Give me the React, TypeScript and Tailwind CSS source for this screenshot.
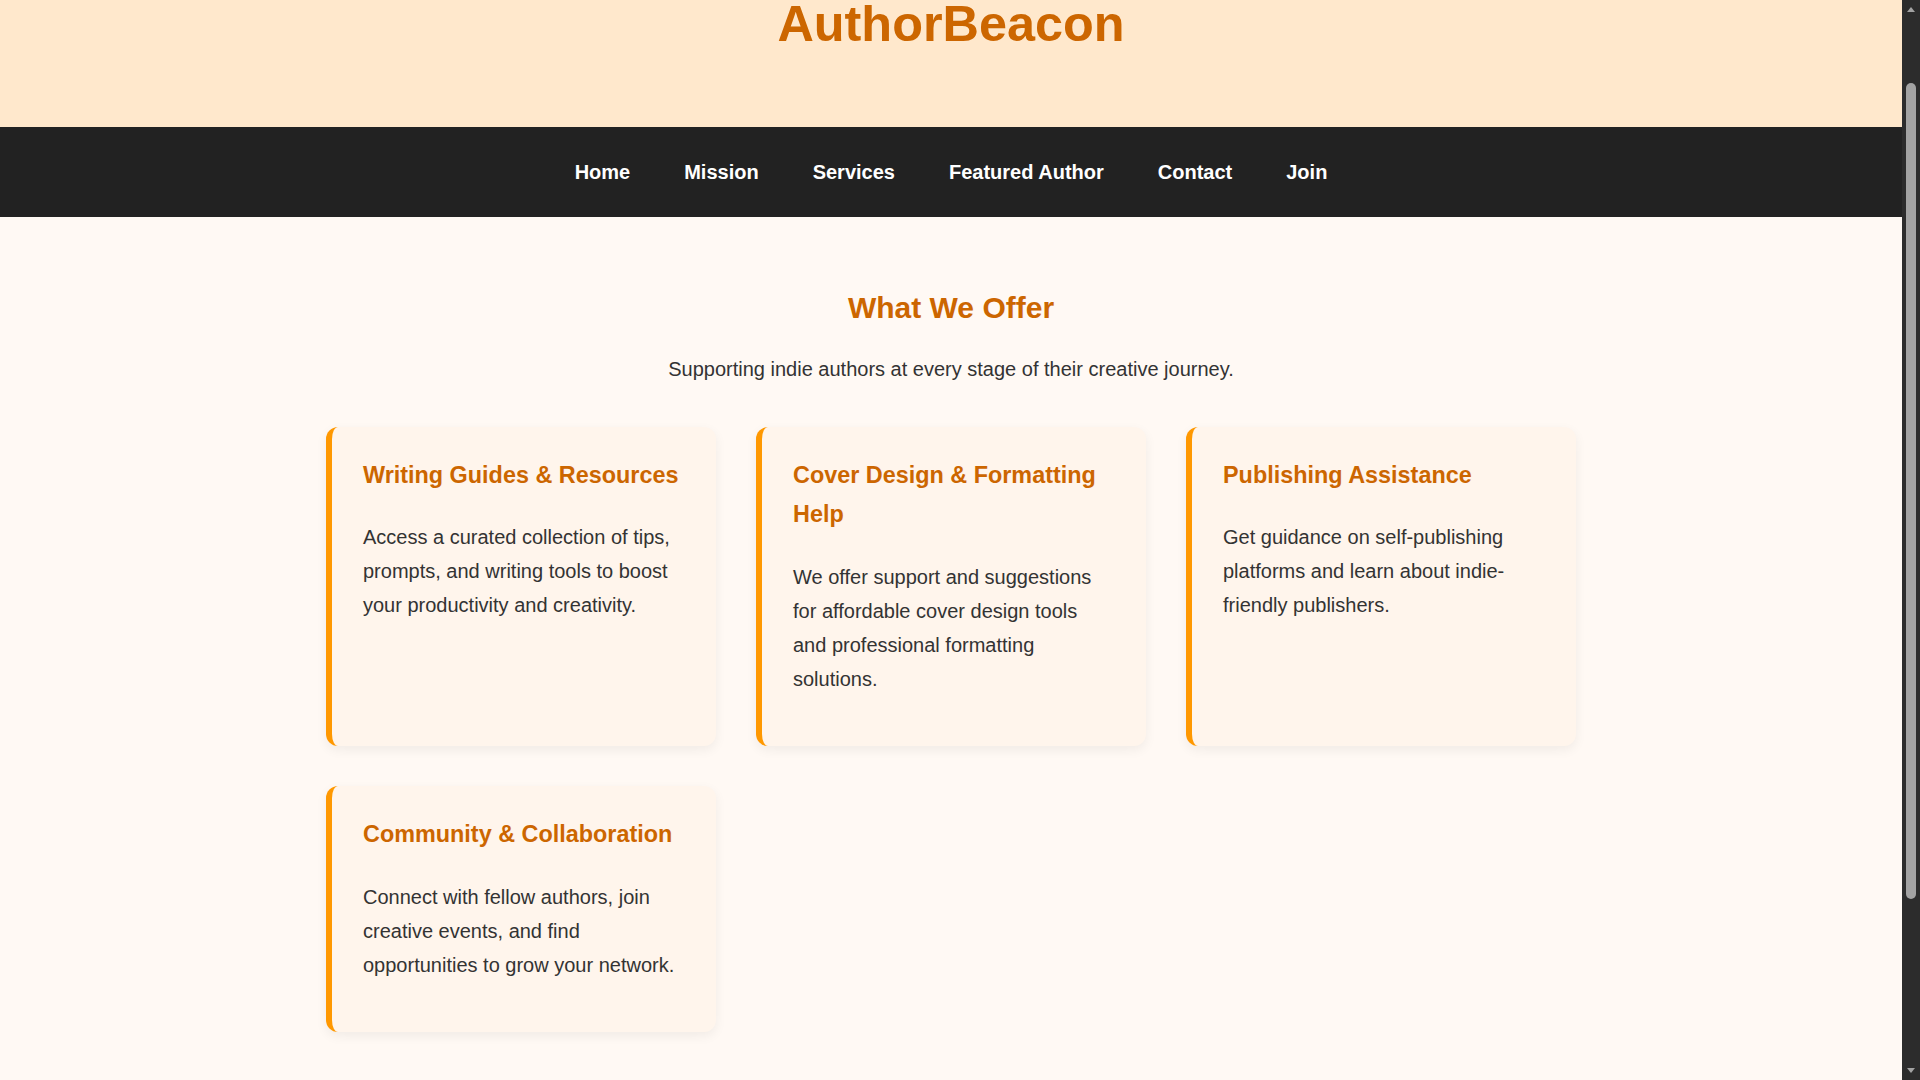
import { useEffect } from 'react';

const services = [
  {
    title: 'Writing Guides & Resources',
    text: 'Access a curated collection of tips, prompts, and writing tools to boost your productivity and creativity.',
  },
  {
    title: 'Cover Design & Formatting Help',
    text: 'We offer support and suggestions for affordable cover design tools and professional formatting solutions.',
  },
  {
    title: 'Publishing Assistance',
    text: 'Get guidance on self-publishing platforms and learn about indie-friendly publishers.',
  },
  {
    title: 'Community & Collaboration',
    text: 'Connect with fellow authors, join creative events, and find opportunities to grow your network.',
  },
];

const links = ['Home', 'Mission', 'Services', 'Featured Author', 'Contact', 'Join'];

function Scrollbar() {
  return (
    <div className="fixed top-0 right-0 h-screen w-[18px] bg-[#2c2c2c] flex flex-col items-center">
      <svg width="10" height="17" viewBox="0 0 10 17" className="shrink-0">
        <path d="M1 12 L5 7 L9 12 Z" fill="#a3a3a3" />
      </svg>
      <div className="mt-[66px] h-[816px] w-[10px] rounded-full bg-[#a3a3a3]" />
      <div className="flex-1" />
      <svg width="10" height="17" viewBox="0 0 10 17" className="shrink-0">
        <path d="M1 5 L5 10 L9 5 Z" fill="#a3a3a3" />
      </svg>
    </div>
  );
}

export default function App() {
  // the reference was taken part way down the page
  useEffect(() => {
    window.scrollTo(0, 87);
  }, []);

  return (
    <div className="min-h-screen pr-[18px] bg-[#fff9f4] font-['Liberation_Sans',Arial,sans-serif] leading-[1.7] text-[#333]">
      <header className="bg-[#ffe8cc] pt-[68px] pb-[60px] text-center">
        <h1 className="text-[50.4px] font-bold text-[#cc6600] leading-[1.7]">AuthorBeacon</h1>
      </header>

      <nav className="h-[90px] bg-[#222] flex items-center justify-center gap-[54px]">
        {links.map((l) => (
          <a key={l} href={'#' + l.toLowerCase().replace(' ', '-')} className="text-white font-bold text-[20px]">
            {l}
          </a>
        ))}
      </nav>

      <section id="services" className="max-w-[1250px] mx-auto pt-[65px] pb-[266px]">
        <h2 className="text-center text-[30px] font-bold text-[#cc6600] leading-[1.7]">What We Offer</h2>
        <p className="mt-[19px] text-center text-[20px]">Supporting indie authors at every stage of their creative journey.</p>

        <div className="grid grid-cols-3 gap-[40px] mt-[41px]">
          {services.map((s) => (
            <div
              key={s.title}
              className="bg-[#fff5ec] rounded-[12px] border-l-[6px] border-[#ff9800] pl-[31px] pr-[30px] pt-[29px] pb-[30px] shadow-[0_4px_12px_rgba(0,0,0,0.06)]"
            >
              <h3 className="text-[23.4px] font-bold text-[#cc6600] leading-[1.7] mb-[25px]">{s.title}</h3>
              <p className="text-[20px] leading-[1.7] mb-[20px]">{s.text}</p>
            </div>
          ))}
        </div>
      </section>

      <Scrollbar />
    </div>
  );
}
